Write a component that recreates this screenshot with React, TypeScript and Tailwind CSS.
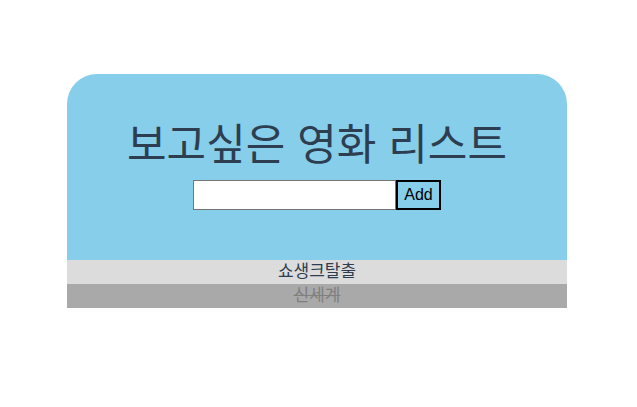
import React, { useState } from "react";

type Movie = { title: string; done: boolean };

const App: React.FC = () => {
  const [movies] = useState<Movie[]>([
    { title: "쇼생크탈출", done: false },
    { title: "신세계", done: true },
  ]);

  return (
    <div className="min-h-[407px] bg-white pt-[74px] font-['Liberation_Sans','Noto_Sans_CJK_KR',sans-serif]">
      <div className="ml-[67px] w-[500px]">
        <header className="flex flex-col items-center rounded-t-[30px] bg-[#87ceeb] pt-[46px] pb-[50px] text-[#2c3e50]">
          <h1 className="text-[43px] leading-[50px] font-normal">보고싶은 영화 리스트</h1>
          <div className="mt-[10px] flex h-[30px]">
            <input
              type="text"
              className="h-[30px] w-[203px] border border-[#767676] bg-white px-1 text-sm outline-none"
            />
            <button className="h-[30px] border-2 border-black bg-transparent px-[6px] text-base text-black">
              Add
            </button>
          </div>
        </header>
        <ul>
          {movies.map((m) => (
            <li
              key={m.title}
              className={
                m.done
                  ? "h-6 bg-[#a9a9a9] text-center text-[17px] leading-6 text-[#808080] line-through"
                  : "h-6 bg-[#dcdcdc] text-center text-[17px] leading-6 text-[#2c3e50]"
              }
            >
              {m.title}
            </li>
          ))}
        </ul>
      </div>
    </div>
  );
};

export default App;
